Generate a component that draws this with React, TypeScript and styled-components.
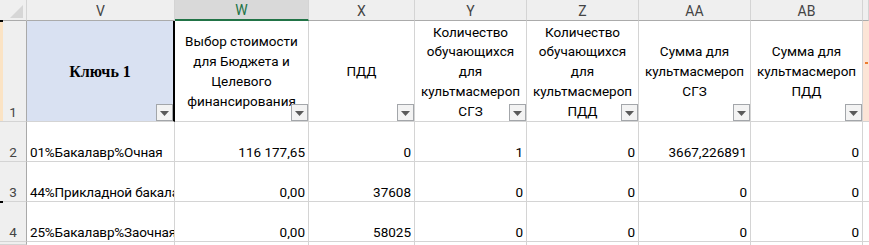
import React from "react";
import styled, { createGlobalStyle, css } from "styled-components";

const GlobalStyle = createGlobalStyle`
  html, body { margin: 0; padding: 0; background: #ffffff; overflow: hidden; }
  * { box-sizing: border-box; }
`;

const FONT = `Roboto, "Noto Sans", "Liberation Sans", sans-serif`;
const GRID = "#d4d4d4";
const HEAD_LINE = "#ababab";

const Sheet = styled.div`
  display: grid;
  grid-template-columns: 27px 148px 134px 106px 112px 112px 112px 112px 1fr;
  grid-template-rows: 21px 101px 40px 40px 40px 1fr;
  width: 869px;
  height: 245px;
  overflow: hidden;
  font-family: ${FONT};
  font-size: 13.5px;
  color: #000;
  background: #fff;
`;

const Corner = styled.div`
  background: #efefef;
  border-right: 1px solid ${GRID};
  border-bottom: 1px solid ${HEAD_LINE};
  display: flex;
  align-items: flex-end;
  justify-content: flex-end;
  padding: 0 3px 2px 0;
`;

const ColHeader = styled.div<{ $selected?: boolean }>`
  background: ${(p) => (p.$selected ? "#d9d9d9" : "#efefef")};
  color: ${(p) => (p.$selected ? "#217346" : "#444")};
  border-right: 1px solid ${GRID};
  border-bottom: ${(p) => (p.$selected ? "2px solid #217346" : `1px solid ${HEAD_LINE}`)};
  display: flex;
  align-items: center;
  justify-content: center;
  font-size: 14px;
  padding-top: 1px;
`;

const RowHeader = styled.div<{ $peach?: boolean; $mark?: boolean }>`
  position: relative;
  background: #efefef;
  color: #444;
  border-right: 1px solid #a9a9a9;
  border-bottom: 1px solid ${GRID};
  display: flex;
  align-items: flex-end;
  justify-content: center;
  padding-bottom: 0;
  line-height: 18px;
  ${(p) =>
    p.$peach &&
    css`
      box-shadow: inset 3px 0 0 #fbe3c4;
    `}
  ${(p) =>
    (p.$peach || p.$mark) &&
    css`
      &::before {
        content: "";
        position: absolute;
        left: 0;
        top: -1px;
        width: 3px;
        height: 2px;
        background: #000;
      }
    `}
`;

const TitleCell = styled.div<{ $fill?: string; $selRight?: boolean }>`
  position: relative;
  background: ${(p) => p.$fill || "#fff"};
  border-right: ${(p) => (p.$selRight ? "2px solid #000" : `1px solid ${GRID}`)};
  border-bottom: 1px solid ${GRID};
  display: flex;
  align-items: center;
  justify-content: center;
  text-align: center;
  line-height: 19.8px;
  padding-top: 2px;
  overflow: hidden;
  white-space: nowrap;
  color: #000;
`;

const KeyTitle = styled.span`
  font-family: "Liberation Serif", "Times New Roman", serif;
  font-weight: bold;
  font-size: 16px;
`;

const FilterButton = styled.span`
  position: absolute;
  right: 0;
  bottom: 0;
  width: 17px;
  height: 17px;
  border: 1px solid #a3a6aa;
  background: #f3f3f3;
  display: flex;
  align-items: center;
  justify-content: center;
  padding-top: 1px;
`;

const PeachCell = styled.div`
  position: relative;
  background: #fce4d6;
  border-bottom: 1px solid ${GRID};
`;

const OrangeTick = styled.span`
  position: absolute;
  left: 2px;
  top: 41px;
  width: 3px;
  height: 2px;
  background: #ed7d31;
`;

const DataCell = styled.div<{ $align?: "left" | "right" }>`
  border-right: 1px solid ${GRID};
  border-bottom: 1px solid ${GRID};
  display: flex;
  align-items: flex-end;
  justify-content: ${(p) => (p.$align === "left" ? "flex-start" : "flex-end")};
  padding: ${(p) => (p.$align === "left" ? "0 0 0 3px" : "0 3px 0 0")};
  letter-spacing: ${(p) => (p.$align === "left" ? "-0.15px" : "0")};
  line-height: 18px;
  white-space: nowrap;
  overflow: hidden;
`;

const EdgeCell = styled.div`
  border-bottom: 1px solid ${GRID};
`;

const Blank = styled.div`
  border-right: 1px solid ${GRID};
`;

const Triangle = () => (
  <svg width="13" height="13" viewBox="0 0 13 13">
    <polygon points="13,0 13,13 0,13" fill="#d6d6d6" />
  </svg>
);

const Arrow = () => (
  <svg width="9" height="5" viewBox="0 0 9 5">
    <polygon points="0,0 9,0 4.5,5" fill="#5a5a5a" />
  </svg>
);

const Filter = () => (
  <FilterButton>
    <Arrow />
  </FilterButton>
);

const columns = ["V", "W", "X", "Y", "Z", "AA", "AB"];

const titles: string[][] = [
  ["Выбор стоимости", "для Бюджета и", "Целевого", "финансирования"],
  ["ПДД"],
  ["Количество", "обучающихся", "для", "культмасмероп", "СГЗ"],
  ["Количество", "обучающихся", "для", "культмасмероп", "ПДД"],
  ["Сумма для", "культмасмероп", "СГЗ"],
  ["Сумма для", "культмасмероп", "ПДД"],
];

const rows: { n: number; key: string; values: string[] }[] = [
  { n: 2, key: "01%Бакалавр%Очная", values: ["116 177,65", "0", "1", "0", "3667,226891", "0"] },
  { n: 3, key: "44%Прикладной бакалавр", values: ["0,00", "37608", "0", "0", "0", "0"] },
  { n: 4, key: "25%Бакалавр%Заочная", values: ["0,00", "58025", "0", "0", "0", "0"] },
];

export default function App() {
  return (
    <>
      <GlobalStyle />
      <Sheet>
        <Corner>
          <Triangle />
        </Corner>
        {columns.map((c) => (
          <ColHeader key={c} $selected={c === "W"}>
            {c}
          </ColHeader>
        ))}
        <ColHeader />

        <RowHeader $peach>1</RowHeader>
        <TitleCell $fill="#d9e1f2" $selRight>
          <KeyTitle>Ключь 1</KeyTitle>
          <Filter />
        </TitleCell>
        {titles.map((lines, i) => (
          <TitleCell key={i}>
            <div>
              {lines.map((l, j) => (
                <div key={j}>{l}</div>
              ))}
            </div>
            <Filter />
          </TitleCell>
        ))}
        <PeachCell>
          <OrangeTick />
        </PeachCell>

        {rows.map((r) => (
          <React.Fragment key={r.n}>
            <RowHeader $mark={r.n === 4}>{r.n}</RowHeader>
            <DataCell $align="left">{r.key}</DataCell>
            {r.values.map((v, i) => (
              <DataCell key={i}>{v}</DataCell>
            ))}
            <EdgeCell />
          </React.Fragment>
        ))}

        <RowHeader />
        {columns.map((c) => (
          <Blank key={c} />
        ))}
        <div />
      </Sheet>
    </>
  );
}
